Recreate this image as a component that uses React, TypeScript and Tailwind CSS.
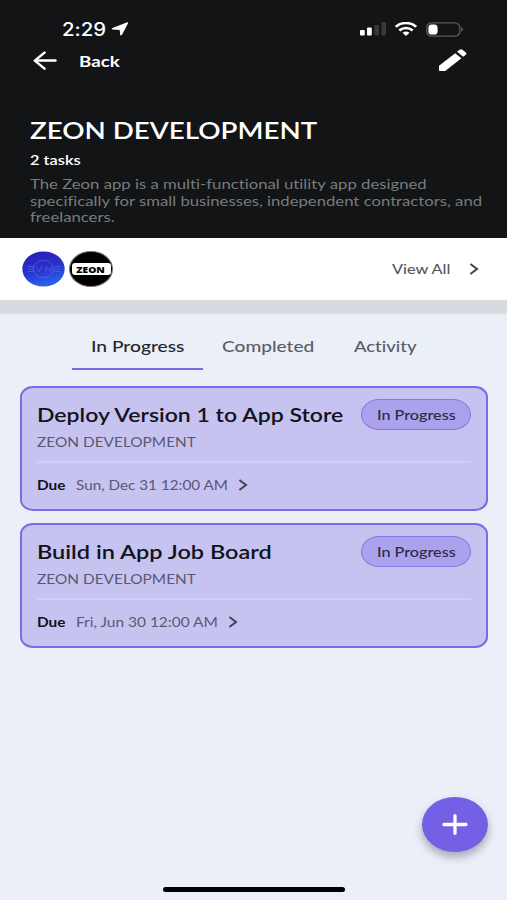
import type { ReactNode } from 'react'
import clsx from 'clsx'

type Task = {
  title: string
  project: string
  due: string
  status: string
  titleClass: string
  dueBox: string
  dueClass: string
}

const TASKS: Task[] = [
  {
    title: 'Deploy Version 1 to App Store',
    project: 'ZEON DEVELOPMENT',
    due: 'Sun, Dec 31 12:00 AM',
    status: 'In Progress',
    titleClass: 'scale-x-[1.151]',
    dueBox: 'w-[153px]',
    dueClass: 'scale-x-[1.09]',
  },
  {
    title: 'Build in App Job Board',
    project: 'ZEON DEVELOPMENT',
    due: 'Fri, Jun 30 12:00 AM',
    status: 'In Progress',
    titleClass: 'scale-x-[1.175]',
    dueBox: 'w-[143px]',
    dueClass: 'scale-x-[1.105]',
  },
]

const TABS = [
  { label: 'In Progress', box: 'w-[131px] pl-[19px]', text: 'scale-x-[1.2]', active: true },
  { label: 'Completed', box: 'w-[131px] pl-[19px]', text: 'scale-x-[1.195]', active: false },
  { label: 'Activity', box: 'w-[101px] pl-[20px]', text: 'scale-x-[1.15]', active: false },
]

// Extended-width text: the glyphs are widened from their left edge
function Wide({ children, className }: { children: ReactNode; className?: string }) {
  return <span className={clsx('inline-block origin-left whitespace-nowrap', className)}>{children}</span>
}

function Chevron({ className }: { className?: string }) {
  return (
    <svg className={className} width="10" height="12" viewBox="0 0 10 12" fill="none" stroke="currentColor" strokeWidth="2.1">
      <path d="M1.4 1 8 6 1.4 11" />
    </svg>
  )
}

function StatusBar() {
  return (
    <div className="flex h-[22px] items-center pl-[62px] text-white">
      <div className="w-[49px] pt-px font-['Inter'] text-[18px] leading-[22px] font-medium">
        <Wide className="scale-x-[1.13]">2:29</Wide>
      </div>
      <svg width="18" height="14" viewBox="0 0 18 14" fill="currentColor">
        <path d="M15.6.4Q17.6 0 16.8 1.8L11 12.8Q9.6 14.5 9.1 12.4L8.7 7.9 1.9 7.6Q-.3 7 1.5 5.9Z" />
      </svg>
      <svg className="ml-[231px]" width="27" height="14" viewBox="0 0 27 14" fill="currentColor">
        <rect x="0" y="8" width="4.8" height="5.5" rx="1" />
        <rect x="7" y="5.6" width="4.8" height="7.9" rx="1" />
        <rect x="14.4" y="3" width="4.6" height="10.5" rx="1" fill="#38393b" />
        <rect x="21.4" y="0" width="4.6" height="13.5" rx="1" fill="#38393b" />
      </svg>
      <svg className="ml-[8px]" width="22" height="14" viewBox="0 0 22 14" fill="none" stroke="currentColor" strokeWidth="2.6">
        <path d="M.8 4.8C6.5-.2 15.5-.2 21.2 4.8" />
        <path d="M4.3 8.4C8.2 5.1 13.8 5.1 17.7 8.4" />
        <path d="M7.5 10.8Q11 8.2 14.5 10.8L11 14Z" fill="currentColor" stroke="none" />
      </svg>
      <svg className="ml-[9px]" width="38" height="15" viewBox="0 0 38 15" fill="none">
        <rect x=".8" y=".8" width="33" height="13.4" rx="4.8" stroke="#58595b" strokeWidth="1.3" />
        <rect x="2.4" y="2.4" width="9.2" height="10.2" rx="3.4" fill="#fff" />
        <path d="M35.2 5.3Q37.2 6 37.2 7.5T35.2 9.7Z" fill="#58595b" />
      </svg>
    </div>
  )
}

function Header() {
  return (
    <header className="h-[238px] bg-[#121416] pt-[18px] text-white">
      <StatusBar />
      <div className="flex h-[41px] items-center pr-[40px] pl-[33px]">
        <svg width="25" height="20" viewBox="0 0 25 20" fill="none" stroke="currentColor" strokeWidth="2.5" strokeLinecap="round" strokeLinejoin="round">
          <path d="M22.5 9.6H2M11.5 1.6 1.8 9.6 11.5 17.6" />
        </svg>
        <div className="ml-[21px] text-[15px] leading-5 font-bold">
          <Wide className="scale-x-[1.25]">Back</Wide>
        </div>
        <svg className="ml-auto" width="28" height="23" viewBox="0 0 28 23" fill="currentColor">
          <path d="M0 16.8 16.2 4.2 22.4 9.2 6.2 22.1H.8Q0 22.1 0 21.3Z" />
          <path d="M18 2.8 20.6.8Q22-.2 23.4.8L26.8 3.6Q28 4.6 26.8 5.7L24.2 7.8Z" />
        </svg>
      </div>
      <div className="mt-[35px] pl-[29.5px]">
        <h1 className="h-[30px] text-[23px] leading-[29px] font-semibold">
          <Wide className="scale-x-[1.205]">ZEON DEVELOPMENT</Wide>
        </h1>
        <p className="h-[28px] text-[14px] leading-[28px] font-semibold">
          <Wide className="scale-x-[1.17]">2 tasks</Wide>
        </p>
        <p className="mt-[2px] text-[14px] leading-[16.5px] text-[#767c80]">
          <Wide className="scale-x-[1.193]">
            The Zeon app is a multi-functional utility app designed
            <br />
            specifically for small businesses, independent contractors, and
            <br />
            freelancers.
          </Wide>
        </p>
      </div>
    </header>
  )
}

function Members() {
  return (
    <>
      <section className="flex h-[62px] items-center bg-white pl-[22px]">
        <svg width="43" height="36" viewBox="0 0 43 36" fill="none">
          <defs>
            <linearGradient id="orb" x1="0.35" y1="0" x2="0.65" y2="1">
              <stop offset="0" stopColor="#2b1fb4" />
              <stop offset=".5" stopColor="#2733cd" />
              <stop offset="1" stopColor="#2b68f0" />
            </linearGradient>
          </defs>
          <ellipse cx="21.5" cy="18" rx="21.2" ry="17.6" fill="url(#orb)" />
          <g stroke="#7d8af0" strokeOpacity=".5" strokeWidth=".8">
            <ellipse cx="21.5" cy="18" rx="10" ry="8.6" />
            <path d="M6 15.5H12M6 18H12M6 20.500H12M14 15.5 17 20.500 20 15.5M24 20.500V15.500L29 20.500V15.500M38 15.500H32M32 18H38M32 20.500H38" />
          </g>
        </svg>
        <div className="ml-[4px] flex h-[36px] w-[44px] items-center justify-center rounded-[50%] border border-[#777] bg-black">
          <div className="flex h-[12px] w-[39px] items-center justify-center rounded-[3px] bg-white font-['Open_Sans'] text-[9px] leading-none font-extrabold text-black">
            <span className="scale-x-[1.14]">ZEON</span>
          </div>
        </div>
        <div className="ml-[279px] w-[77px] text-[14px] leading-5 font-medium text-[#55585d]">
          <Wide className="scale-x-[1.16]">View All</Wide>
        </div>
        <Chevron className="text-[#45474c]" />
      </section>
      <div className="h-[13px] rounded-b-[3px] bg-[#d7dbe0] shadow-[0_1px_2px_#d7dbe0]" />
    </>
  )
}

function Tabs() {
  return (
    <nav className="flex h-[57px] pl-[72px]">
      {TABS.map((t) => (
        <div
          key={t.label}
          className={clsx(
            'h-full border-b-2 pt-[23px] text-[16px] leading-5 font-medium',
            t.box,
            t.active ? 'border-[#7869e4] text-[#24262b]' : 'border-transparent text-[#5a5d63]',
          )}
        >
          <Wide className={t.text}>{t.label}</Wide>
        </div>
      ))}
    </nav>
  )
}

function TaskCard({ task }: { task: Task }) {
  return (
    <article className="h-[125px] rounded-[13px/11px] border-2 border-[#7b6be4] bg-[#c6c3f1] pt-[11px] pr-[15px] pl-[15px]">
      <div className="flex h-[31px] items-center justify-between">
        <h2 className="text-[20px] leading-[31px] font-semibold text-[#11131a]">
          <Wide className={task.titleClass}>{task.title}</Wide>
        </h2>
        <div className="flex h-[31px] w-[110px] shrink-0 items-center rounded-[18px/15.5px] border border-[#8577e6] bg-[#aba2ed] pl-[15px] text-[14px] leading-5 font-medium text-[#2b2945]">
          <Wide className="scale-x-[1.155]">{task.status}</Wide>
        </div>
      </div>
      <div className="h-[33px] border-b-2 border-[#d0cef1] text-[14px] leading-[24px] text-[#5a5872]">
        <Wide className="scale-x-[1.1]">{task.project}</Wide>
      </div>
      <div className="flex h-[44px] items-center text-[14px] leading-5 text-[#5a5872]">
        <div className="w-[38.5px] font-bold text-[#11131a]">
          <Wide className="scale-x-[1.1]">Due</Wide>
        </div>
        <div className={clsx('mr-[9px]', task.dueBox)}>
          <Wide className={task.dueClass}>{task.due}</Wide>
        </div>
        <Chevron className="text-[#45435a]" />
      </div>
    </article>
  )
}

export default function App() {
  return (
    <div className="relative h-[900px] w-[507px] overflow-hidden bg-[#ebeff7] font-['Lato',sans-serif] [font-variant-ligatures:none]">
      <Header />
      <Members />
      <Tabs />
      <main className="mt-[16px] flex flex-col gap-[12px] pr-[19px] pl-[20px]">
        {TASKS.map((t) => (
          <TaskCard key={t.title} task={t} />
        ))}
      </main>

      <button className="absolute top-[797px] left-[422px] flex h-[55px] w-[66px] items-center justify-center rounded-[50%] bg-[#7460e4] text-white shadow-[0_5px_8px_rgba(60,60,90,0.4)]">
        <svg width="26" height="21" viewBox="0 0 26 21" fill="none" stroke="currentColor" strokeWidth="3.3" strokeLinecap="round">
          <path d="M13 1.7V19.3M2 10.5H24" />
        </svg>
      </button>
      <div className="absolute top-[887px] left-[163px] h-[5px] w-[182px] rounded-full bg-black" />
    </div>
  )
}
